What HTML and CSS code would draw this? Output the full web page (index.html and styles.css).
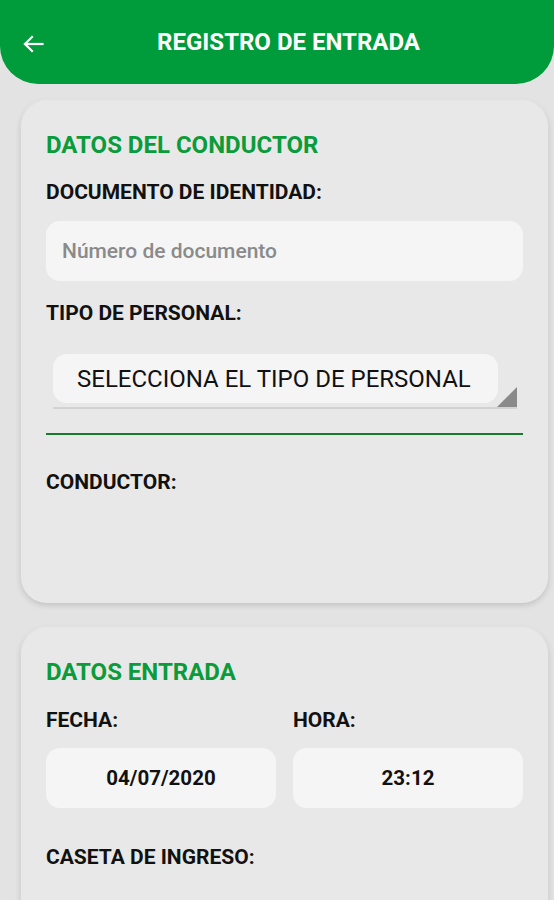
FILE: index.html
```html
<!DOCTYPE html>
<html lang="es">
<head>
<meta charset="utf-8">
<title>Registro de entrada</title>
<link rel="stylesheet" href="styles.css">
</head>
<body>
<header class="topbar">
  <span class="back">
    <svg width="22" height="20" viewBox="0 0 22 20" fill="none" stroke="#fff" stroke-width="2.2" stroke-linecap="square">
      <path d="M20.5 10H3"/>
      <path d="M10 3L3 10l7 7"/>
    </svg>
  </span>
  <h1 class="title">REGISTRO DE ENTRADA</h1>
</header>

<section class="card card-driver">
  <h2 class="card-title">DATOS DEL CONDUCTOR</h2>
  <div class="label label-doc">DOCUMENTO DE IDENTIDAD:</div>
  <div class="input"><span class="placeholder">Número de documento</span></div>
  <div class="label label-tipo">TIPO DE PERSONAL:</div>
  <div class="spinner">
    <div class="spinner-box">SELECCIONA EL TIPO DE PERSONAL</div>
    <span class="spinner-arrow"></span>
  </div>
  <div class="green-line"></div>
  <div class="label label-cond">CONDUCTOR:</div>
</section>

<section class="card card-entry">
  <h2 class="card-title">DATOS ENTRADA</h2>
  <div class="cols">
    <div class="col">
      <div class="label">FECHA:</div>
      <div class="value-box">04/07/2020</div>
    </div>
    <div class="col">
      <div class="label">HORA:</div>
      <div class="value-box">23:12</div>
    </div>
  </div>
  <div class="label label-caseta">CASETA DE INGRESO:</div>
</section>
</body>
</html>
```

FILE: styles.css
```css
* { box-sizing: border-box; }

html, body {
  height: 900px;
  overflow: hidden;
}

body {
  margin: 0;
  background: #e3e3e3;
  font-family: Roboto, "Noto Sans", sans-serif;
  color: #111;
}

.topbar {
  height: 84px;
  background: #009b3a;
  border-radius: 0 0 38px 38px;
  display: flex;
  align-items: center;
  padding: 0 21px 0 22px;
}

.back {
  width: 22px;
  height: 20px;
  display: flex;
  margin-top: 4px;
}

.title {
  flex: 1;
  margin: 0;
  text-align: center;
  color: #fff;
  font-size: 24px;
  font-weight: 700;
  line-height: 28px;
}

.card {
  margin: 17px 6px 0 21px;
  background: #e8e8e8;
  border-radius: 26px;
  box-shadow: 0 2px 6px rgba(0, 0, 0, 0.16), 0 -1px 2px rgba(255, 255, 255, 0.6);
  padding: 30px 25px 0 25px;
}

.card-driver {
  height: 502px;
}

.card-entry {
  margin-top: 25px;
  height: 300px;
}

.card-title {
  margin: 0;
  color: #0a9b3a;
  font-size: 24px;
  font-weight: 700;
  line-height: 28px;
}

.label {
  font-size: 21px;
  font-weight: 700;
  line-height: 24px;
  color: #111;
  white-space: nowrap;
}

.label-doc { margin-top: 21px; }

.input {
  margin-top: 17px;
  height: 60px;
  background: #f5f5f5;
  border-radius: 14px;
  display: flex;
  align-items: center;
  padding-left: 16px;
}

.placeholder {
  color: #8a8a8a;
  font-size: 21px;
  font-weight: 500;
}

.label-tipo { margin-top: 20px; }

.spinner {
  position: relative;
  margin: 29px 0 0 7px;
  width: 464px;
  height: 55px;
  border-bottom: 2px solid #d2d2d2;
}

.spinner-box {
  width: 445px;
  height: 49px;
  background: #f5f5f5;
  border-radius: 14px;
  display: flex;
  align-items: center;
  padding-left: 24px;
  font-size: 24px;
  font-weight: 400;
  color: #111;
  white-space: nowrap;
}

.spinner-arrow {
  position: absolute;
  right: 0;
  bottom: 0;
  width: 0;
  height: 0;
  border-left: 20px solid transparent;
  border-bottom: 20px solid #8a8a8a;
}

.green-line {
  margin-top: 24px;
  height: 2px;
  background: #177a2c;
}

.label-cond { margin-top: 35px; }

.cols {
  display: grid;
  grid-template-columns: 1fr 1fr;
  column-gap: 17px;
  margin-top: 22px;
}

.value-box {
  margin-top: 16px;
  height: 60px;
  background: #f5f5f5;
  border-radius: 14px;
  display: flex;
  align-items: center;
  justify-content: center;
  font-size: 20.5px;
  font-weight: 700;
  color: #111;
}

.label-caseta { margin-top: 37px; }
```
